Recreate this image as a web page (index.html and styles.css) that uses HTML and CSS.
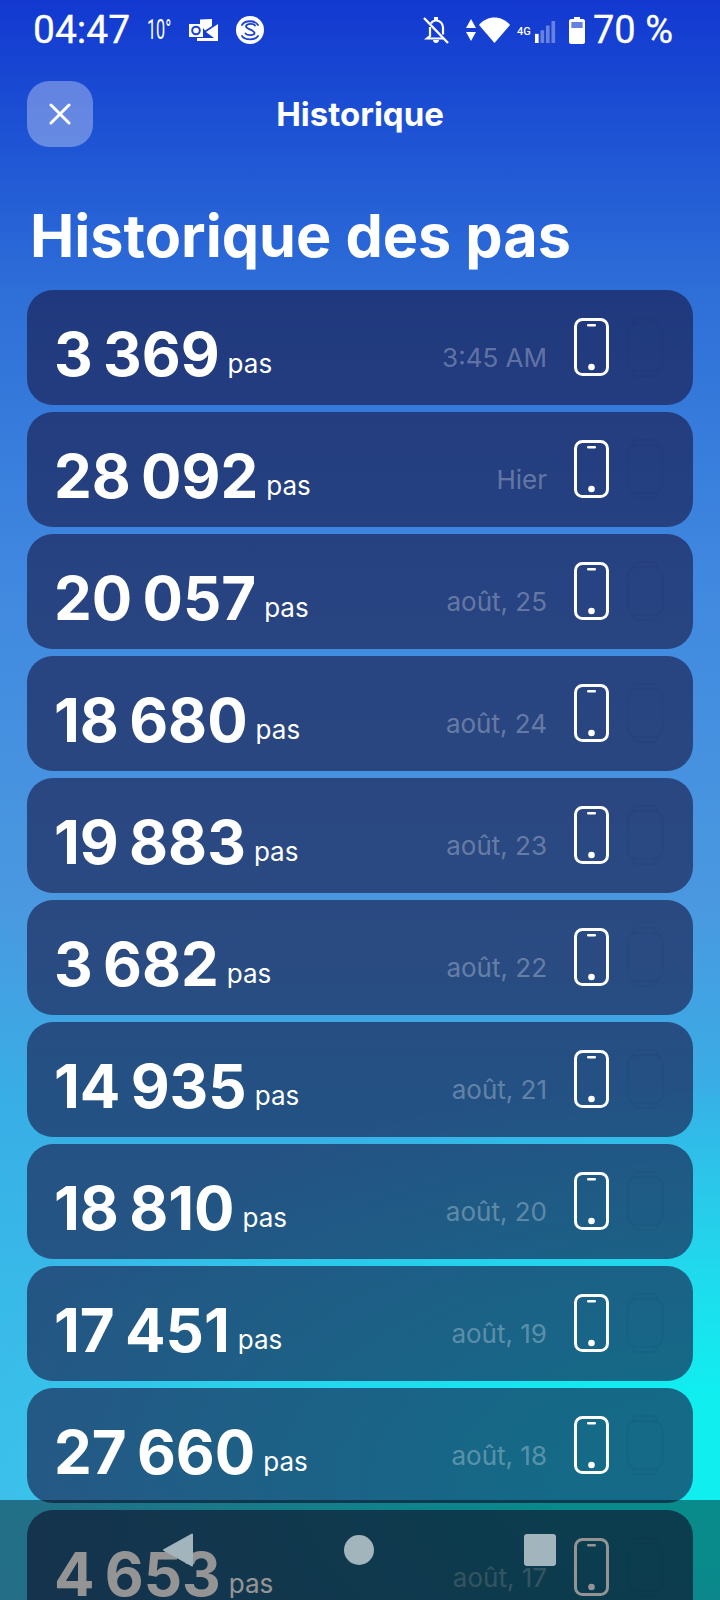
FILE: index.html
```html
<!DOCTYPE html>
<html lang="fr">
<head>
<meta charset="utf-8">
<title>Historique</title>
<link rel="stylesheet" href="styles.css">
</head>
<body>
<div class="screen">
  <div class="status">
    <span class="time">04:47</span>
    <span class="temp">10°</span>
    <svg class="ic-outlook" viewBox="0 0 30 22"><path fill="#fff" d="M11 5V0.5L23 0v7l-7 4.500zM0 5h14v13H0zM17 13l12-8v14h-4zM8 19h21v3H8z"/><circle cx="7" cy="11.500" r="3.800" fill="none" stroke="#1a42d0" stroke-width="2"/></svg>
    <svg class="ic-sweat" viewBox="0 0 28 28"><circle cx="14" cy="14" r="14" fill="#fff"/><path fill="none" stroke="#1a42d0" stroke-width="1.800" stroke-linecap="round" d="M19 9.500c-1-2-8-2.500-9 .5-.8 3 8 3.500 8.500 7 .2 2.500-7 3-9 .5M6 9C9 4 19 4 22 9M6 20c3 4.500 13 4.500 16 0"/></svg>
    <span class="status-gap"></span>
    <svg class="ic-bell" viewBox="0 0 26 28"><path fill="none" stroke="#fff" stroke-width="2.200" d="M7 11v9l-3 2.500h16M8 7.500c1-2 3-3 5-3 4 0 7 3 7 7v7"/><path fill="#fff" d="M10 24h6c0 4-6 4-6 0zM11 1h4v3h-4z"/><path stroke="#fff" stroke-width="2.400" d="M1 2l24 25"/></svg>
    <svg class="ic-arrows" viewBox="0 0 10 28"><path fill="#fff" d="M5 3l5 9H0zM0 16h10l-5 9z"/></svg>
    <svg class="ic-wifi" viewBox="0 0 31 26"><path fill="#fff" d="M0 8C8-2 23-2 31 8L15.500 26z"/></svg>
    <span class="net">4G</span>
    <svg class="ic-signal" viewBox="0 0 23 24"><path fill="#fff" d="M0 14h4v10H0z"/><path fill="#fff" opacity=".35" d="M6 10h4v14H6zM12 5h4v19h-4zM18 0h4v24h-4z"/></svg>
    <svg class="ic-battery" viewBox="0 0 16 27"><path fill="#fff" fill-rule="evenodd" d="M5 0h6v2h3c1 0 2 1 2 2v21c0 1-1 2-2 2H2c-1 0-2-1-2-2V4c0-1 1-2 2-2h3zM2.500 5v6h11V5z"/><path fill="#fff" opacity=".35" d="M2.500 5h11v6h-11z"/></svg>
    <span class="pct">70 %</span>
  </div>

  <header class="topbar">
    <button class="close" type="button" aria-label="Fermer">
      <svg viewBox="0 0 22 22"><path fill="none" stroke="#fff" stroke-width="3" stroke-linecap="round" d="M2 2l18 18M20 2L2 20"/></svg>
    </button>
    <span class="topbar-title">Historique</span>
  </header>

  <h1 class="title">Historique des pas</h1>

  <ul class="list">
    <li class="card"><span class="num">3 369</span><span class="unit">pas</span><span class="date">3:45 AM</span><svg class="phone" viewBox="0 0 35 58"><use href="#i-phone"/></svg><svg class="watch" viewBox="0 0 38 60"><use href="#i-watch"/></svg></li>
    <li class="card"><span class="num">28 092</span><span class="unit">pas</span><span class="date">Hier</span><svg class="phone" viewBox="0 0 35 58"><use href="#i-phone"/></svg><svg class="watch" viewBox="0 0 38 60"><use href="#i-watch"/></svg></li>
    <li class="card"><span class="num">20 057</span><span class="unit">pas</span><span class="date">août, 25</span><svg class="phone" viewBox="0 0 35 58"><use href="#i-phone"/></svg><svg class="watch" viewBox="0 0 38 60"><use href="#i-watch"/></svg></li>
    <li class="card"><span class="num">18 680</span><span class="unit">pas</span><span class="date">août, 24</span><svg class="phone" viewBox="0 0 35 58"><use href="#i-phone"/></svg><svg class="watch" viewBox="0 0 38 60"><use href="#i-watch"/></svg></li>
    <li class="card"><span class="num">19 883</span><span class="unit">pas</span><span class="date">août, 23</span><svg class="phone" viewBox="0 0 35 58"><use href="#i-phone"/></svg><svg class="watch" viewBox="0 0 38 60"><use href="#i-watch"/></svg></li>
    <li class="card"><span class="num">3 682</span><span class="unit">pas</span><span class="date">août, 22</span><svg class="phone" viewBox="0 0 35 58"><use href="#i-phone"/></svg><svg class="watch" viewBox="0 0 38 60"><use href="#i-watch"/></svg></li>
    <li class="card"><span class="num">14 935</span><span class="unit">pas</span><span class="date">août, 21</span><svg class="phone" viewBox="0 0 35 58"><use href="#i-phone"/></svg><svg class="watch" viewBox="0 0 38 60"><use href="#i-watch"/></svg></li>
    <li class="card"><span class="num">18 810</span><span class="unit">pas</span><span class="date">août, 20</span><svg class="phone" viewBox="0 0 35 58"><use href="#i-phone"/></svg><svg class="watch" viewBox="0 0 38 60"><use href="#i-watch"/></svg></li>
    <li class="card"><span class="num">17 451</span><span class="unit">pas</span><span class="date">août, 19</span><svg class="phone" viewBox="0 0 35 58"><use href="#i-phone"/></svg><svg class="watch" viewBox="0 0 38 60"><use href="#i-watch"/></svg></li>
    <li class="card"><span class="num">27 660</span><span class="unit">pas</span><span class="date">août, 18</span><svg class="phone" viewBox="0 0 35 58"><use href="#i-phone"/></svg><svg class="watch" viewBox="0 0 38 60"><use href="#i-watch"/></svg></li>
    <li class="card"><span class="num">4 653</span><span class="unit">pas</span><span class="date">août, 17</span><svg class="phone" viewBox="0 0 35 58"><use href="#i-phone"/></svg><svg class="watch" viewBox="0 0 38 60"><use href="#i-watch"/></svg></li>
  </ul>

  <nav class="navbar">
    <svg class="nav-back" viewBox="0 0 30 34"><path fill="currentColor" stroke="currentColor" stroke-width="2" stroke-linejoin="round" d="M29 1.500v31L1 17z"/></svg>
    <span class="nav-home"></span>
    <span class="nav-recent"></span>
  </nav>
</div>

<svg class="defs" aria-hidden="true">
  <defs>
    <g id="i-phone">
      <rect x="1.500" y="1.500" width="32" height="55" rx="7" fill="none" stroke="currentColor" stroke-width="3"/>
      <rect x="13" y="6" width="9" height="2.600" rx="1.300" fill="currentColor"/>
      <circle cx="17.500" cy="49" r="3.300" fill="currentColor"/>
    </g>
    <g id="i-watch">
      <rect x="1.500" y="6" width="35" height="48" rx="9" fill="none" stroke="currentColor" stroke-width="2"/>
      <path fill="none" stroke="currentColor" stroke-width="2" d="M7 6l2-5h20l2 5M7 54l2 5h20l2-5"/>
    </g>
  </defs>
</svg>
</body>
</html>
```

FILE: styles.css
```css
* { box-sizing: border-box; }
html, body { margin: 0; padding: 0; }
body { width: 720px; height: 1600px; overflow: hidden; font-family: Inter, "Liberation Sans", sans-serif; color: #fff; }

.screen {
  position: relative;
  width: 720px;
  height: 1600px;
  overflow: hidden;
  background:
    radial-gradient(ellipse 760px 400px at 100% 1480px, #10eef0 22%, rgba(16,238,240,0) 100%),
    linear-gradient(180deg, #1238d0 0, #1d52d4 130px, #2f70d8 300px, #418ae0 600px, #4a98e0 900px, #38aee6 1100px, #38bae8 1300px, #40bcea 1500px);
}

.defs { position: absolute; width: 0; height: 0; }

/* status bar */
.status { display: flex; align-items: center; height: 60px; padding: 0 0 0 33px; font-family: Roboto, sans-serif; }
.time { font-size: 39px; font-weight: 400; width: 98px; -webkit-text-stroke: .3px #fff; }
.temp { font-size: 27px; margin-left: 16px; width: 24px; transform: scaleX(.6); transform-origin: left center; }
.ic-outlook { width: 30px; height: 22px; margin-left: 18px; }
.ic-sweat { width: 28px; height: 28px; margin-left: 17px; }
.status-gap { flex: 0 0 159px; }
.ic-bell { width: 26px; height: 28px; }
.ic-arrows { width: 10px; height: 28px; margin-left: 17px; }
.ic-wifi { width: 31px; height: 26px; margin-left: 3px; }
.net { font-size: 11px; width: 16px; margin-left: 7px; margin-top: 2px; font-weight: 500; }
.ic-signal { width: 23px; height: 22px; margin-left: 1px; margin-top: 3px; }
.ic-battery { width: 16px; height: 27px; margin-left: 12px; }
.pct { font-size: 38px; margin-left: 8px; white-space: nowrap; -webkit-text-stroke: .3px #fff; }

/* top bar */
.topbar { position: relative; display: flex; align-items: center; height: 66px; margin-top: 21px; padding-left: 27px; }
.close { display: flex; align-items: center; justify-content: center; width: 66px; height: 66px; padding: 0; border: 0; border-radius: 22px; background: rgba(255,255,255,.32); }
.close svg { width: 22px; height: 22px; }
.topbar-title { position: absolute; left: 0; right: 0; text-align: center; font-size: 33px; font-weight: 700; }

/* title */
.title { margin: 0; padding: 50px 0 16px 30px; font-size: 59.3px; font-weight: 700; line-height: 77px; }

/* list */
.list { list-style: none; margin: 0; padding: 0 27px; display: flex; flex-direction: column; gap: 7px; }
.card { display: flex; align-items: baseline; height: 115px; flex: 0 0 115px; padding: 0 29px 0 27px; border-radius: 26px; background: rgba(24,25,71,.62); position: relative; line-height: 1; }
.num { font-size: 60px; font-weight: 700; padding-top: 34px; word-spacing: -4px; }
.unit { font-size: 26px; font-weight: 400; margin-left: 8px; position: relative; top: -3px; }
.date { margin-left: auto; font-size: 26px; color: rgba(255,255,255,.3); position: relative; top: -9px; }
.phone { align-self: flex-start; width: 35px; height: 58px; margin-top: 28px; margin-left: 27px; color: #fff; flex: none; }
.watch { align-self: flex-start; width: 38px; height: 60px; margin-top: 27px; margin-left: 17px; color: rgba(24,25,71,.05); flex: none; }

/* system navigation */
.navbar { position: absolute; left: 0; right: 0; bottom: 0; height: 100px; display: flex; align-items: center; justify-content: space-between; padding: 0 164px 0 163px; background: rgba(0,0,0,.42); color: #a2b4bc; }
.nav-back { width: 30px; height: 34px; }
.nav-home { width: 30px; height: 30px; border-radius: 50%; background: currentColor; }
.nav-recent { width: 32px; height: 32px; border-radius: 3px; background: currentColor; }
```
